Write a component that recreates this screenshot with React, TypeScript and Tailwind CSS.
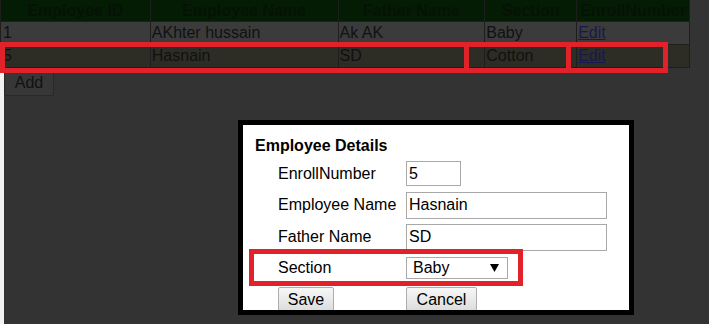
const columns = [
  { title: "Employee ID", width: "w-[150px]" },
  { title: "Employee Name", width: "w-[188px]" },
  { title: "Father Name", width: "w-[147px]" },
  { title: "Section", width: "w-[92px]" },
  { title: "EnrollNumber", width: "w-[113px]" },
]

const employees = [
  { id: "1", name: "AKhter hussain", father: "Ak AK", section: "Baby", bg: "bg-[#3b3b3b]" },
  { id: "5", name: "Hasnain", father: "SD", section: "Cotton", bg: "bg-[#2d2d25]" },
]

function EmployeeTable() {
  return (
    <div className="w-[690px] border-l border-[#1e1e1e]">
      <div className="flex h-[22px] bg-[#031c03]">
        {columns.map((col) => (
          <div
            key={col.title}
            className={`${col.width} flex items-center justify-center border-r border-b border-[#1e1e1e] font-bold text-[16px] text-[#071207]`}
          >
            {col.title}
          </div>
        ))}
      </div>
      {employees.map((emp) => (
        <div key={emp.id} className={`flex h-[23px] ${emp.bg} text-[16px] text-[#111]`}>
          <div className="w-[150px] flex items-center pl-[2px] border-r border-b border-[#1e1e1e]">{emp.id}</div>
          <div className="w-[188px] flex items-center pl-[1px] border-r border-b border-[#1e1e1e]">{emp.name}</div>
          <div className="w-[147px] flex items-center pl-[1px] border-r border-b border-[#1e1e1e]">{emp.father}</div>
          <div className="w-[92px] flex items-center pl-[1px] border-r border-b border-[#1e1e1e]">{emp.section}</div>
          <div className="w-[113px] flex items-center pl-[1px] border-r border-b border-[#1e1e1e]">
            <span className="underline text-[#181850]">Edit</span>
          </div>
        </div>
      ))}
    </div>
  )
}

function FormRow({ label, height, children }: { label: string; height: string; children: React.ReactNode }) {
  return (
    <div className={`flex items-center ${height}`}>
      <div className="w-[128px] text-[16px] text-black">{label}</div>
      {children}
    </div>
  )
}

function TextBox({ value, width, height }: { value: string; width: string; height: string }) {
  return (
    <input
      readOnly
      value={value}
      className={`${width} ${height} border border-[#a9a9a9] px-[2px] text-[16px] text-black bg-white outline-none`}
    />
  )
}

function EmployeeDialog() {
  return (
    <div className="absolute left-[238px] top-[120px] w-[396px] h-[195px] border-[5px] border-black bg-white overflow-hidden">
      <div className="pl-[12px] pt-[12px] h-[30px] text-[16px] leading-[18px] font-bold text-black">Employee Details</div>
      <div className="pl-[35px] mt-[3px]">
        <FormRow label="EnrollNumber" height="h-[31px]">
          <TextBox value="5" width="w-[55px]" height="h-[25px]" />
        </FormRow>
        <FormRow label="Employee Name" height="h-[32px]">
          <TextBox value="Hasnain" width="w-[201px]" height="h-[27px]" />
        </FormRow>
        <FormRow label="Father Name" height="h-[32px]">
          <TextBox value="SD" width="w-[201px]" height="h-[27px]" />
        </FormRow>
        <FormRow label="Section" height="h-[30px]">
          <div className="w-[102px] h-[22px] border border-[#a9a9a9] flex items-center justify-between pl-[6px] pr-[8px] text-[16px] text-black">
            <span>Baby</span>
            <svg width="9" height="8" viewBox="0 0 9 8">
              <path d="M0 0 L9 0 L4.5 8 Z" fill="#000" />
            </svg>
          </div>
        </FormRow>
        <div className="flex mt-[4px]">
          <div className="w-[128px]">
            <button className="w-[56px] h-[24px] border border-[#adadad] rounded-[2px] bg-gradient-to-b from-[#f7f7f7] to-[#dddddd] text-[16px] text-black">
              Save
            </button>
          </div>
          <button className="w-[71px] h-[24px] border border-[#adadad] rounded-[2px] bg-gradient-to-b from-[#f7f7f7] to-[#dddddd] text-[16px] text-black">
            Cancel
          </button>
        </div>
      </div>
    </div>
  )
}

export default function App() {
  return (
    <div className="w-[715px] h-[331px] bg-white overflow-hidden" style={{ fontFamily: '"Liberation Sans", Arial, sans-serif' }}>
      <div className="relative w-[709px] h-[324px] bg-[#333333]">
        <EmployeeTable />
        <div className="pl-[4px] pt-[1px]">
          <button className="w-[50px] h-[27px] border border-[#292929] rounded-[2px] bg-[#373737] text-[16px] text-[#111]">
            Add
          </button>
        </div>

        <div className="absolute left-0 top-[73px] w-[4px] h-[251px] bg-[#f2f2f2]" />

        <EmployeeDialog />

        <div className="absolute left-0 top-[42px] w-[469px] h-[31px] border-[5px] border-[#e2222b]" />
        <div className="absolute left-[464px] top-[42px] w-[107px] h-[31px] border-[5px] border-[#e2222b]" />
        <div className="absolute left-[566px] top-[42px] w-[102px] h-[31px] border-[5px] border-[#e2222b]" />
        <div className="absolute left-[249px] top-[249px] w-[274px] h-[37px] border-[5px] border-[#e2222b]" />
      </div>
    </div>
  )
}
